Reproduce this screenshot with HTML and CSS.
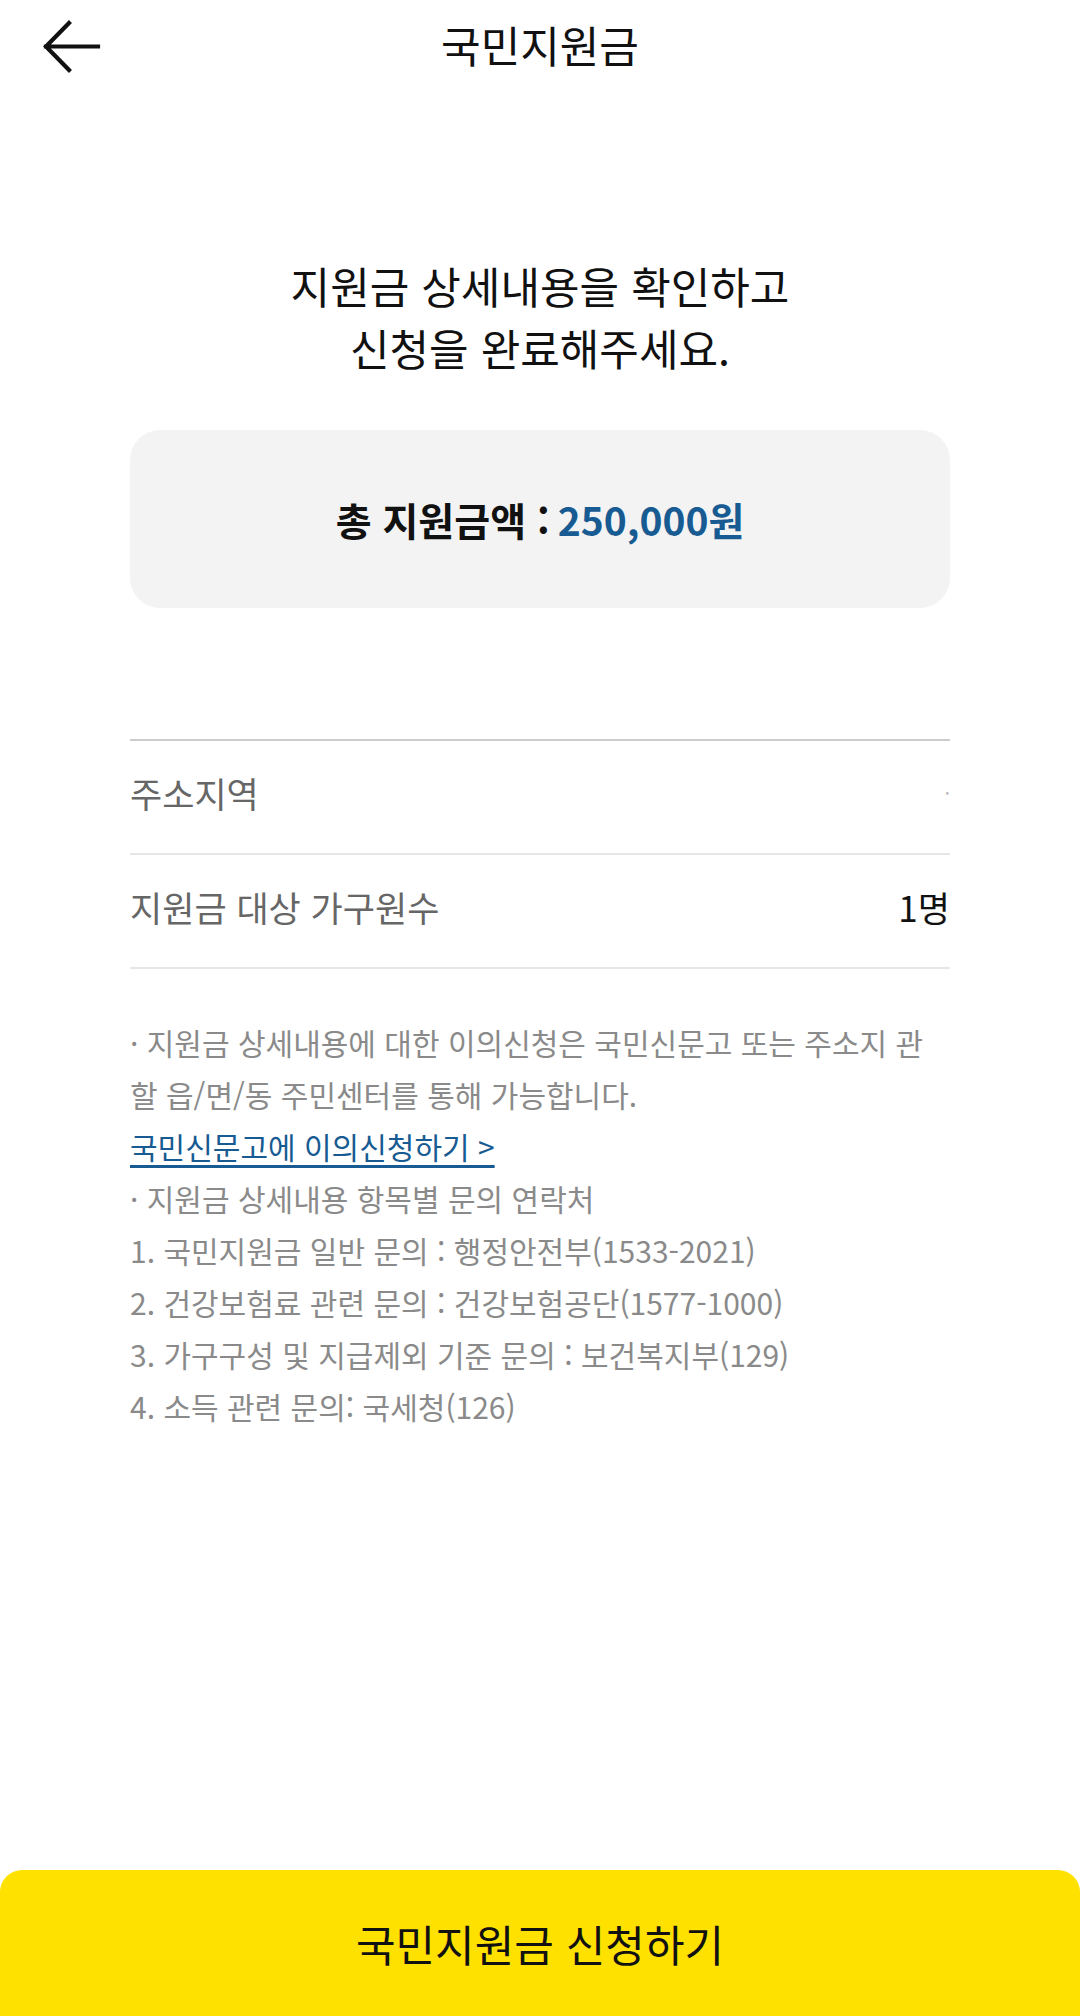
FILE: index.html
```html
<!DOCTYPE html>
<html lang="ko">
<head>
    <meta charset="UTF-8">
    <meta name="viewport" content="width=device-width, initial-scale=1.0">
    <title>국민지원금</title>
    <link rel="stylesheet" href="styles.css">
</head>
<body>
    <header class="appbar">
        <button class="back-btn" aria-label="뒤로">
            <svg width="60" height="56" viewBox="0 0 60 56">
                <path d="M27 4 L4 27.5 L27 51 M4 27.5 H56" fill="none" stroke="#111" stroke-width="4.2" stroke-linecap="square"/>
            </svg>
        </button>
        <h1 class="appbar-title">국민지원금</h1>
    </header>

    <main class="content">
        <p class="lead">지원금 상세내용을 확인하고<br>신청을 완료해주세요.</p>

        <div class="total-box">
            <span class="total-label">총 지원금액 :</span>
            <span class="total-amount">250,000원</span>
        </div>

        <div class="detail-list">
            <div class="detail-row">
                <span class="detail-label">주소지역</span>
                <span class="detail-value muted">·</span>
            </div>
            <div class="detail-row">
                <span class="detail-label">지원금 대상 가구원수</span>
                <span class="detail-value">1명</span>
            </div>
        </div>

        <div class="notes">
            <p>· 지원금 상세내용에 대한 이의신청은 국민신문고 또는 주소지 관<br>할 읍/면/동 주민센터를 통해 가능합니다.</p>
            <p><a href="#" class="notes-link">국민신문고에 이의신청하기 &gt;</a></p>
            <p>· 지원금 상세내용 항목별 문의 연락처</p>
            <p>1. 국민지원금 일반 문의 : 행정안전부(1533-2021)</p>
            <p>2. 건강보험료 관련 문의 : 건강보험공단(1577-1000)</p>
            <p>3. 가구구성 및 지급제외 기준 문의 : 보건복지부(129)</p>
            <p>4. 소득 관련 문의: 국세청(126)</p>
        </div>
    </main>

    <footer class="bottom-bar">
        <button class="apply-btn">국민지원금 신청하기</button>
    </footer>
</body>
</html>
```

FILE: styles.css
```css
/* General Styles */
body {
    margin: 0;
    height: 100vh;
    display: flex;
    flex-direction: column;
    background: #fff;
    color: #111;
    font-family: "Noto Sans CJK KR", "Noto Sans", sans-serif;
}

/* App Bar */
.appbar {
    height: 96px;
    display: flex;
    align-items: center;
}
.back-btn {
    background: none;
    border: none;
    padding: 0;
    margin: 0 0 2px 42px;
    width: 60px;
    height: 56px;
    cursor: pointer;
}
.back-btn svg {
    display: block;
}
.appbar-title {
    flex: 1;
    margin: 0 102px 8px 0;
    text-align: center;
    font-size: 43px;
    font-weight: 400;
}

/* Content */
.content {
    flex: 1;
    padding: 0 130px;
}
.lead {
    margin: 158px 0 52px;
    text-align: center;
    font-size: 43px;
    line-height: 62px;
}

/* Total Box */
.total-box {
    height: 178px;
    background: #f3f3f3;
    border-radius: 30px;
    display: flex;
    justify-content: center;
    align-items: center;
    gap: 8px;
    font-size: 39px;
    font-weight: 700;
}
.total-amount {
    color: #175b92;
}

/* Detail Rows */
.detail-list {
    margin-top: 131px;
    border-top: 2px solid #cccccc;
}
.detail-row {
    height: 102px;
    padding-bottom: 10px;
    border-bottom: 2px solid #e6e6e6;
    display: flex;
    justify-content: space-between;
    align-items: center;
    font-size: 35px;
}
.detail-label {
    color: #666;
}
.detail-value {
    color: #111;
}
.detail-value.muted {
    color: #bbb;
    font-size: 20px;
}

/* Notes */
.notes {
    margin-top: 47px;
    color: #8a8a8a;
    font-size: 30px;
    line-height: 52px;
}
.notes p {
    margin: 0;
}
.notes-link {
    color: #175b92;
    text-decoration: underline;
    text-decoration-thickness: 3px;
    text-underline-offset: 6px;
}

/* Bottom Button */
.bottom-bar {
    height: 146px;
}
.apply-btn {
    width: 100%;
    height: 100%;
    border: none;
    border-radius: 22px 22px 0 0;
    background: #ffe100;
    color: #111;
    font-family: inherit;
    font-size: 43px;
    cursor: pointer;
}
```
